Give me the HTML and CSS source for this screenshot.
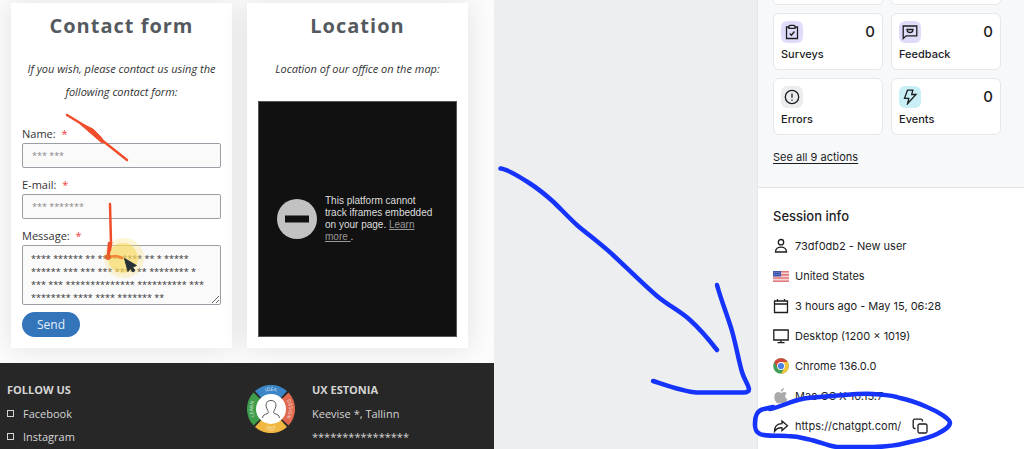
FILE: index.html
```html
<!DOCTYPE html>
<html lang="en">
<head>
    <meta charset="UTF-8">
    <meta name="viewport" content="width=device-width, initial-scale=1.0">
    <title>Session replay</title>
    <link rel="stylesheet" href="styles.css">
</head>

<body>
<div class="app">
    <main class="replay">
        <div class="replay__cards">
            <section class="card">
                <h2 class="card__title">Contact form</h2>
                <p class="card__intro">If you wish, please contact us using the following contact form:</p>
                <form class="form">
                    <label class="form__label" for="name">Name: <span class="form__required">*</span></label>
                    <input class="form__field" type="text" id="name" value="*** ***">
                    <label class="form__label" for="email">E-mail: <span class="form__required">*</span></label>
                    <input class="form__field" type="text" id="email" value="*** *******">
                    <label class="form__label" for="message">Message: <span class="form__required">*</span></label>
                    <textarea class="form__field form__field--message" id="message">******* ************** ******* **** ***
**** ****** ** ********* ** * *****
****** *** *** *** **** ** ******** *
*** *** ************** ********** ***
******** **** **** ******* **</textarea>
                    <button class="form__send" type="button">Send</button>
                </form>
            </section>

            <section class="card">
                <h2 class="card__title">Location</h2>
                <p class="card__intro">Location of our office on the map:</p>
                <div class="blocked">
                    <svg class="blocked__icon" viewBox="0 0 40 40" aria-hidden="true">
                        <circle cx="20" cy="20" r="20" fill="#c2c2c2"/>
                        <rect x="8" y="16.5" width="24" height="7" fill="#111"/>
                    </svg>
                    <p class="blocked__text">This platform cannot track iframes embedded on your page. <a href="#">Learn more </a>.</p>
                </div>
            </section>
        </div>

        <footer class="footer">
            <div class="footer__column">
                <h3 class="footer__title">FOLLOW US</h3>
                <ul class="footer__list">
                    <li><a class="footer__link" href="#">Facebook</a></li>
                    <li><a class="footer__link" href="#">Instagram</a></li>
                </ul>
            </div>
            <div class="footer__company">
                <svg class="footer__logo" viewBox="0 0 48 48" aria-hidden="true">
                    <defs>
                        <path id="arc-top" d="M6 24a18 18 0 0 1 36 0"/>
                        <path id="arc-right" d="M24 6a18 18 0 0 1 0 36"/>
                        <path id="arc-bottom" d="M2.5 24a21.5 21.5 0 0 0 43 0"/>
                        <path id="arc-left" d="M24 42a18 18 0 0 1 0-36"/>
                    </defs>
                    <path d="M24 24 8 6a24 24 0 0 1 32 0z" fill="#3b86c6"/>
                    <path d="M24 24 41.5 7.5a24 24 0 0 1 0 33z" fill="#e0694f"/>
                    <path d="M24 24 40 42a24 24 0 0 1-32 0z" fill="#f0b840"/>
                    <path d="M24 24 6.5 40.5a24 24 0 0 1 0-33z" fill="#3f9c4b"/>
                    <circle cx="24" cy="24" r="15" fill="#fff"/>
                    <path d="M15.5 33c.5-3 2-3.5 4.5-4.2 1.5-.5 1.7-1.8.8-3.3C17.5 20 19 15.5 24 15.5S30.5 20 27.2 25.5c-.9 1.5-.7 2.8.8 3.3 2.5.7 4 1.2 4.5 4.2" fill="none" stroke="#555"/>
                    <g class="footer__logo-text">
                        <text><textPath href="#arc-top" startOffset="50%">IDEA</textPath></text>
                        <text><textPath href="#arc-right" startOffset="50%">DESIGN</textPath></text>
                        <text><textPath href="#arc-bottom" startOffset="50%">TEST</textPath></text>
                        <text><textPath href="#arc-left" startOffset="50%">LEARN</textPath></text>
                    </g>
                </svg>
                <div>
                    <h3 class="footer__title">UX ESTONIA</h3>
                    <p class="footer__text">Keevise *, Tallinn</p>
                    <p class="footer__text">****************</p>
                </div>
            </div>
        </footer>
    </main>

    <aside class="sidebar">
        <section class="actions">
            <div class="actions__grid">
                <div class="action action--cut"></div>
                <div class="action action--cut"></div>
                <div class="action">
                    <div class="action__top">
                        <span class="action__icon action__icon--violet">
                            <svg viewBox="0 0 16 16"><path d="M5 3H2.5v11.5h11V3H11M5 2.5a1.2 1.2 0 0 1 1.2-1.2h3.6A1.2 1.2 0 0 1 11 2.5v1.8H5zM5.7 9.5l1.7 1.7 3-3.7"/></svg>
                        </span>
                        <span class="action__count">0</span>
                    </div>
                    <span class="action__name">Surveys</span>
                </div>
                <div class="action">
                    <div class="action__top">
                        <span class="action__icon action__icon--violet">
                            <svg viewBox="0 0 16 16"><path d="M1.2 2h13.6v9.8H4.2l-3 2.7zM5 5.5h6c0 4-6 4-6 0z"/></svg>
                        </span>
                        <span class="action__count">0</span>
                    </div>
                    <span class="action__name">Feedback</span>
                </div>
                <div class="action">
                    <div class="action__top">
                        <span class="action__icon action__icon--grey">
                            <svg viewBox="0 0 16 16"><circle cx="8" cy="8" r="6.7"/><path d="M8 4.5v4.3M8 10.5v1.2"/></svg>
                        </span>
                    </div>
                    <span class="action__name">Errors</span>
                </div>
                <div class="action">
                    <div class="action__top">
                        <span class="action__icon action__icon--cyan">
                            <svg viewBox="0 0 16 16"><path d="M5.5 1.2h5.3L9.7 5.5H14L5.5 14.8 6.8 9.3H2.5z"/></svg>
                        </span>
                        <span class="action__count">0</span>
                    </div>
                    <span class="action__name">Events</span>
                </div>
            </div>
            <a class="actions__all" href="#">See all 9 actions</a>
        </section>

        <section class="session">
            <h2 class="session__title">Session info</h2>
            <ul class="session__list">
                <li class="session__item">
                    <svg viewBox="0 0 16 16"><circle cx="8" cy="4.2" r="2.7"/><path d="M2.5 14c0-6.5 11-6.5 11 0z"/></svg>
                    73df0db2 - New user
                </li>
                <li class="session__item">
                    <svg viewBox="0 0 16 16" stroke="none">
                        <path d="M0 3h16v11H0z" fill="#f5d5d6"/>
                        <path d="M0 3h16v1.6H0zM0 6.1h16v1.6H0zM0 9.2h16v1.6H0zM0 12.4h16V14H0z" fill="#e0787c"/>
                        <path d="M0 3h8v5.5H0z" fill="#3e55ae"/>
                        <path d="M1 4.5h6M1 6.5h6" stroke="#a6b2dc" stroke-width=".7" stroke-dasharray=".8 1"/>
                    </svg>
                    United States
                </li>
                <li class="session__item">
                    <svg viewBox="0 0 16 16"><path d="M1.5 3h13v11.5h-13zM1.5 6h13M4.5 1v2.5M11.5 1v2.5"/></svg>
                    3 hours ago - May 15, 06:28
                </li>
                <li class="session__item">
                    <svg viewBox="0 0 16 16"><path d="M.8 2h14.4v10H.8zM8 12v2.5M4.5 14.7h7"/></svg>
                    Desktop (1200 × 1019)
                </li>
                <li class="session__item">
                    <svg viewBox="0 0 16 16" stroke="none">
                        <circle cx="8" cy="8" r="7.8" fill="#3f9e57"/>
                        <path d="M1.25 4.1a7.8 7.8 0 0 1 13.5 0H8L4.6 10z" fill="#d6473b"/>
                        <path d="M14.75 4.1A7.8 7.8 0 0 1 8 15.8L11.4 10 8 4.1z" fill="#f4c63d"/>
                        <circle cx="8" cy="8" r="3.9" fill="#fff"/>
                        <circle cx="8" cy="8" r="3.1" fill="#4a80e8"/>
                    </svg>
                    Chrome 136.0.0
                </li>
                <li class="session__item">
                    <svg viewBox="0 0 16 16" stroke="none">
                        <path d="M10.8 0c.2 1.8-1.2 3.6-3 3.7C7.6 2 9.1.3 10.8 0zM13.8 5.3c-2.4 1.6-1.9 4.7.6 5.8-.6 1.9-2.1 4.5-3.6 4.5-1 0-1.4-.6-2.6-.6s-1.7.6-2.6.6C3.5 15.6 1.3 12 1.3 8.7c0-3.3 2-4.8 4-4.8 1.2 0 2.1.8 2.9.8s1.9-.9 3.3-.8c1 .1 1.8.6 2.3 1.4z" fill="#aaa"/>
                    </svg>
                    Mac OS X 10.15.7
                </li>
                <li class="session__item">
                    <svg viewBox="0 0 16 16"><path d="M9 3l5.5 4.8L9 12.5V9.8c-3.5-.3-5.7 1-7.5 3.7C1.5 9 4 5.8 9 5.7z"/></svg>
                    https://chatgpt.com/
                    <button class="session__copy" type="button" aria-label="Copy">
                        <svg viewBox="0 0 16 16"><rect x="6" y="6" width="9" height="9" rx="1.5"/><path d="M3.5 10.5H2.7A1.5 1.5 0 0 1 1.2 9V2.7a1.5 1.5 0 0 1 1.5-1.5H9a1.5 1.5 0 0 1 1.5 1.5v.8"/></svg>
                    </button>
                </li>
            </ul>
        </section>
    </aside>

    <!-- mouse trail, cursor and pen marks -->
    <svg class="marks" width="1024" height="449" viewBox="0 0 1024 449" aria-hidden="true">
        <circle cx="124" cy="258" r="20" fill="#f8df77" opacity=".3"/>
        <circle cx="123" cy="258" r="15" fill="#f8d95e" opacity=".6"/>
        <g class="marks__trail">
            <path d="M67 115 90 129 103 141 127 160"/>
            <path d="M78 122 93 129 101 137 104 142 102 143 88 131z" fill="#f04e2b" stroke-width="1"/>
            <path d="M110 204 111 243 108 257"/>
            <path d="M109 243 108 256M111 243 110 250"/>
            <path d="M108 257 116 256 122 258" stroke="#f58634"/>
            <circle cx="108" cy="257" r="3" fill="#e6632c" stroke="none"/>
        </g>
        <path d="M124.5 258.5 128 271.5 130.5 268.5 133 272 135 270.5 132.5 267 136.5 265.5z" fill="#273036" stroke="#273036"/>
        <g class="marks__pen">
            <path d="M500.5 168.5C507 169 520 177 530 183.5S548 197 553 201.5 570 219 578 226C590 236 601 244 613 255S645 286 657 296 680 311 690 320 710 341 717 350"/>
            <path d="M717 285C722 303 728 317 732 331S739 362 742 372C744 379 748 384 749 389 749 392 746 392.5 743 392.5H697C684 392 668 386 653 381"/>
            <path d="M770 409C781 407 791 401 802 399 812 397 823 397 833 396 847 395 860 393 873 394 884 395 892 395 900 398 910 400 918 403 927 407 939 412 950 419 950 423 949 428 943 431 937 434 929 438 920 440 910 442 896 446 884 447 873 447H837C828 446 818 441 807 439 800 437 794 436 787 436 777 435 767 437 760 434 754 431 755 426 755 423 755 417 757 410 764 409L773 407"/>
        </g>
    </svg>
</div>

<script>
    const message = document.querySelector('#message')
    message.scrollTop = message.scrollHeight
</script>
</body>
</html>
```

FILE: styles.css
```css
*,
*::before,
*::after {
    box-sizing: border-box;
}

body {
    margin: 0;
    background-color: #edeef0;
    overflow: hidden;
}

h2,
h3,
p,
ul {
    margin: 0;
    padding: 0;
}

ul {
    list-style: none;
}

.app {
    column-gap: 263px;
    display: grid;
    grid-template-columns: minmax(0, 494fr) minmax(0, 267fr);
    min-height: 100vh;
    position: relative;
}

/* recorded page */

.replay {
    background-color: #fcfcfc;
    color: #333;
    display: flex;
    flex-direction: column;
    font-family: "Open Sans", "Noto Sans", sans-serif;
    font-size: 11px;
    line-height: 23px;
}

.replay__cards {
    display: grid;
    gap: 15px;
    grid-template-columns: 1fr 1fr;
    overflow: hidden;
    padding: 3px 26px 15px 11px;
}

.card {
    background-color: #fff;
    box-shadow: 0 0 26px rgba(0, 0, 0, 0.11);
    display: flex;
    flex-direction: column;
    padding: 11px;
}

.card__title {
    color: #555a60;
    font-size: 20px;
    font-weight: 700;
    letter-spacing: 1px;
    line-height: 24px;
    text-align: center;
}

.card__intro {
    font-style: italic;
    margin-bottom: 21px;
    margin-top: 19px;
    text-align: center;
}

.form {
    display: flex;
    flex-direction: column;
}

.form__label {
    line-height: 19px;
}

.form__required {
    color: #f0413c;
    margin-left: 3px;
}

.form__field {
    background-color: #fafafa;
    border: 1px solid #9a9fa6;
    border-radius: 2px;
    color: #888;
    font-family: inherit;
    font-size: 9px;
    height: 25px;
    margin: 0 0 7px;
    outline: none;
    padding: 0 9px;
    width: 100%;
}

.form__field--message {
    color: #333;
    height: 60px;
    line-height: 13px;
    overflow: hidden;
    padding: 0 8px;
    resize: vertical;
    white-space: pre;
}

.form__send {
    align-self: flex-start;
    background-color: #3275bb;
    border: 0;
    border-radius: 13px;
    color: #e6eef7;
    font-family: inherit;
    font-size: 12px;
    height: 25px;
    padding: 0 15px;
}

.blocked {
    align-items: center;
    background-color: #111;
    border: 1px solid #555;
    display: flex;
    flex: 1;
    gap: 8px;
    padding: 0 18px;
}

.blocked__icon {
    flex: none;
    height: 40px;
    width: 40px;
}

.blocked__text {
    color: #ddd;
    font-family: "Liberation Sans", Arial, sans-serif;
    font-size: 10px;
    line-height: 12px;
}

.blocked__text a {
    color: #999;
}

.footer {
    background-color: #272727;
    color: #d5d5d5;
    display: grid;
    flex: 1;
    grid-template-columns: 240fr 247fr;
    padding: 15px 0 0 7px;
}

.footer__title {
    font-size: 11px;
    font-weight: 700;
    margin-bottom: 1px;
}

.footer__link {
    align-items: center;
    color: inherit;
    display: flex;
    gap: 9px;
    text-decoration: none;
}

.footer__link::before {
    border: 1px solid #d5d5d5;
    content: "";
    height: 7px;
    width: 7px;
}

.footer__company {
    display: flex;
    gap: 17px;
}

.footer__logo {
    flex: none;
    height: 48px;
    margin-top: 7px;
    width: 48px;
}

.footer__logo-text {
    fill: #fff;
    font-size: 5px;
    opacity: 0.8;
    text-anchor: middle;
}

/* session details */

.sidebar {
    background-color: #fff;
    border-left: 1px solid #e6e7ea;
    color: #1c1d1f;
    font-family: Inter, sans-serif;
    font-size: 11px;
    line-height: 16px;
}

.sidebar svg {
    fill: none;
    flex: none;
    height: 16px;
    stroke: #1c1d1f;
    stroke-width: 1.3;
    width: 16px;
}

.sidebar svg[stroke="none"] {
    stroke: none;
}

.actions {
    background-color: #f7f8fa;
    border-bottom: 1px solid #e3e4e8;
    padding: 0 23px 22px 15px;
}

.actions__grid {
    display: grid;
    gap: 8px;
    grid-template-columns: 1fr 1fr;
    margin-bottom: 14px;
}

.action {
    background-color: #fff;
    border: 1px solid #e6e7ea;
    border-radius: 6px;
    padding: 7px;
}

.action--cut {
    border-radius: 0 0 6px 6px;
    border-top: 0;
    height: 5px;
    padding: 0;
}

.action__top {
    align-items: center;
    display: flex;
    justify-content: space-between;
    margin-bottom: 3px;
}

.action__icon {
    border-radius: 6px;
    display: flex;
    padding: 3px;
}

.action__icon--violet {
    background-color: #dedcf9;
}

.action__icon--grey {
    background-color: #ecedef;
}

.action__icon--cyan {
    background-color: #c8eff5;
}

.action__count {
    font-size: 15px;
    font-weight: 500;
}

.action__name {
    display: block;
    font-weight: 500;
}

.actions__all {
    color: inherit;
    display: block;
    text-underline-offset: 2px;
}

.session {
    padding: 20px 15px 0;
}

.session__title {
    font-size: 13px;
    font-weight: 500;
    line-height: 16px;
    margin-bottom: 14px;
}

.session__list {
    display: flex;
    flex-direction: column;
    gap: 14px;
}

.session__item {
    align-items: center;
    display: flex;
    gap: 6px;
    height: 16px;
}

.session__copy {
    background: none;
    border: 0;
    display: flex;
    margin-left: 5px;
    padding: 0;
}

.marks {
    left: 0;
    pointer-events: none;
    position: absolute;
    top: 0;
}

.marks__trail,
.marks__pen {
    fill: none;
    stroke-linecap: round;
    stroke-linejoin: round;
}

.marks__trail {
    stroke: #f04e2b;
    stroke-width: 2.5;
}

.marks__pen {
    stroke: #1533fb;
    stroke-width: 4.5;
}
```
